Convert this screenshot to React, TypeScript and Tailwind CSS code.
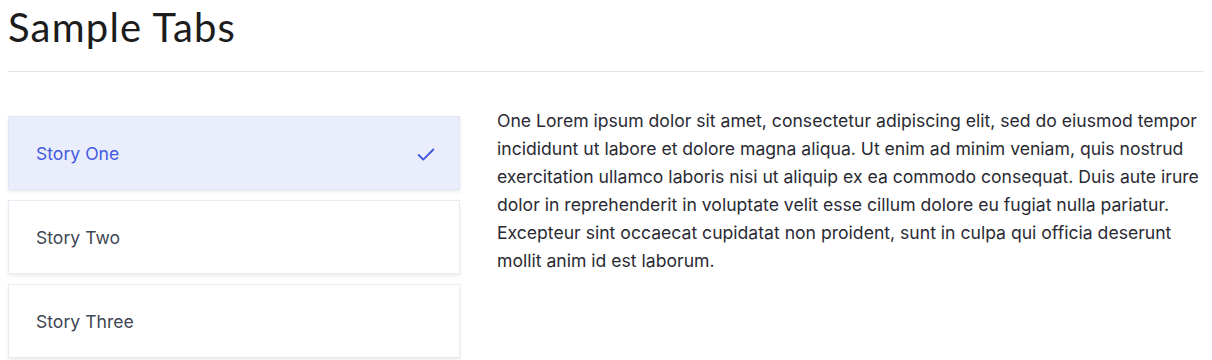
import { useState } from "react";
import { Check } from "lucide-react";

const stories = [
  {
    id: 1,
    title: "Story One",
    body: "One Lorem ipsum dolor sit amet, consectetur adipiscing elit, sed do eiusmod tempor incididunt ut labore et dolore magna aliqua. Ut enim ad minim veniam, quis nostrud exercitation ullamco laboris nisi ut aliquip ex ea commodo consequat. Duis aute irure dolor in reprehenderit in voluptate velit esse cillum dolore eu fugiat nulla pariatur. Excepteur sint occaecat cupidatat non proident, sunt in culpa qui officia deserunt mollit anim id est laborum.",
  },
  {
    id: 2,
    title: "Story Two",
    body: "Two Lorem ipsum dolor sit amet, consectetur adipiscing elit, sed do eiusmod tempor incididunt ut labore et dolore magna aliqua. Ut enim ad minim veniam, quis nostrud exercitation ullamco laboris nisi ut aliquip ex ea commodo consequat.",
  },
  {
    id: 3,
    title: "Story Three",
    body: "Three Lorem ipsum dolor sit amet, consectetur adipiscing elit, sed do eiusmod tempor incididunt ut labore et dolore magna aliqua.",
  },
];

export default function App() {
  const [activeId, setActiveId] = useState(1);
  const active = stories.find((s) => s.id === activeId) ?? stories[0];

  return (
    <div className="min-h-screen bg-white px-2 font-['Inter',sans-serif]">
      <h1 className="pt-[1px] pb-[18px] text-[40px] leading-[52px] font-normal tracking-[0.03em] text-[#1c1c1c] font-['Lato',sans-serif] border-b border-[#e5e5e5]">
        Sample Tabs
      </h1>

      <div className="mt-[44px] grid grid-cols-[452px_1fr] gap-x-[37px]">
        <div className="flex flex-col gap-[10px]">
          {stories.map((s) => {
            const isActive = s.id === activeId;
            return (
              <button
                key={s.id}
                type="button"
                onClick={() => setActiveId(s.id)}
                className={
                  isActive
                    ? "flex h-[74px] items-center justify-between border border-[#e1e6f3] bg-[#eaedfb] pt-[3px] pl-[27px] pr-[22px] text-left text-[17.6px] text-[#4359e0] shadow-[0_2px_4px_rgba(0,0,0,0.08)]"
                    : "flex h-[74px] items-center justify-between border border-[#e8ecf2] bg-white pt-[3px] pl-[27px] pr-[22px] text-left text-[17.6px] text-[#3f4654] shadow-[0_2px_4px_rgba(0,0,0,0.08)]"
                }
              >
                <span>{s.title}</span>
                {isActive ? <Check size={22} strokeWidth={2} className="text-[#3f55de]" /> : null}
              </button>
            );
          })}
        </div>

        <p className="-mt-[9px] text-[17.6px] leading-[28px] text-[#2a2a33]">{active.body}</p>
      </div>
    </div>
  );
}
